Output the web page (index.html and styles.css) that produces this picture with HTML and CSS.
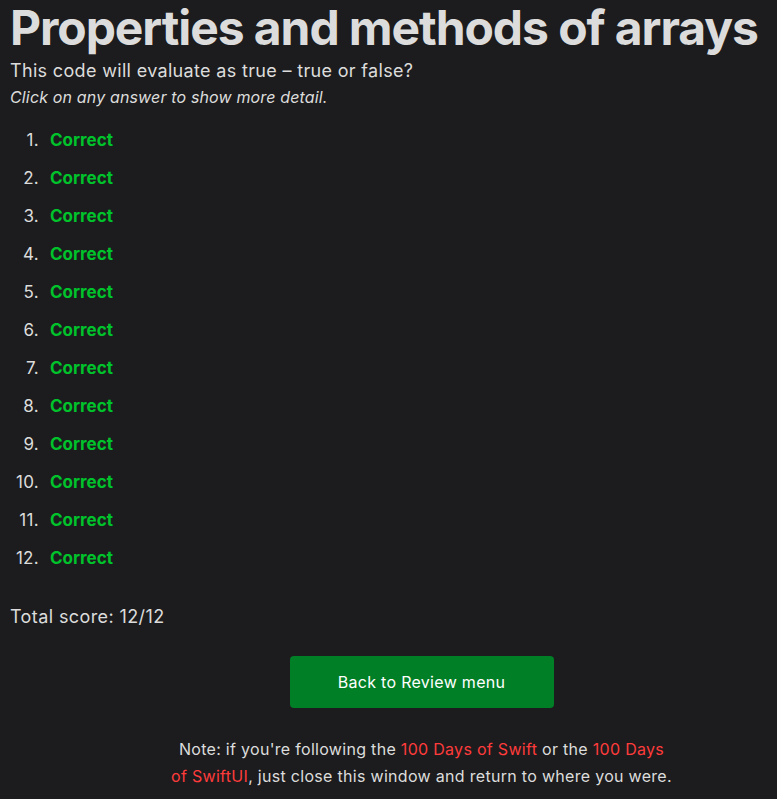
FILE: index.html
```html
<!DOCTYPE html>
<html lang="en">
<head>
<meta charset="utf-8">
<title>Properties and methods of arrays</title>
<link rel="stylesheet" href="styles.css">
</head>
<body>
<main class="page">
  <h1 class="title">Properties and methods of arrays</h1>
  <p class="subtitle">This code will evaluate as true – true or false?</p>
  <p class="hint">Click on any answer to show more detail.</p>
  <ol class="answers">
    <li><span class="correct">Correct</span></li>
    <li><span class="correct">Correct</span></li>
    <li><span class="correct">Correct</span></li>
    <li><span class="correct">Correct</span></li>
    <li><span class="correct">Correct</span></li>
    <li><span class="correct">Correct</span></li>
    <li><span class="correct">Correct</span></li>
    <li><span class="correct">Correct</span></li>
    <li><span class="correct">Correct</span></li>
    <li><span class="correct">Correct</span></li>
    <li><span class="correct">Correct</span></li>
    <li><span class="correct">Correct</span></li>
  </ol>
  <p class="score">Total score: 12/12</p>
  <div class="footer">
    <div class="actions">
      <a class="button" href="#">Back to Review menu</a>
    </div>
    <p class="note">Note: if you're following the <a href="#">100 Days of Swift</a> or the <a href="#">100 Days of SwiftUI</a>, just close this window and return to where you were.</p>
  </div>
</main>
</body>
</html>
```

FILE: styles.css
```css
html, body {
  margin: 0;
  padding: 0;
  background: #1c1c1e;
}
body {
  color: #dcdcdc;
  font-family: Inter, "Noto Sans", "Liberation Sans", sans-serif;
}
.page {
  padding: 0 10px;
}
.title {
  margin: 0;
  padding-top: 2px;
  font-size: 48px;
  font-weight: 700;
  line-height: 52px;
  letter-spacing: -1.08px;
  white-space: nowrap;
}
.subtitle {
  margin: 4px 0 0;
  font-size: 18px;
  line-height: 26px;
  letter-spacing: 0.33px;
}
.hint {
  margin: 0;
  font-size: 16px;
  font-style: italic;
  line-height: 26px;
  letter-spacing: 0.15px;
}
.answers {
  margin: 11px 0 0;
  padding: 0;
  list-style: none;
  counter-reset: item;
  font-size: 17px;
}
.answers li {
  display: flex;
  line-height: 38px;
  counter-increment: item;
}
.answers li::before {
  content: counter(item) ".";
  width: 29px;
  margin-right: 11px;
  text-align: right;
  letter-spacing: 0.3px;
}
.correct {
  color: #00c32c;
  font-weight: 700;
}
.score {
  margin: 27px 0 0;
  font-size: 18px;
  line-height: 26px;
  letter-spacing: 0.4px;
}
.footer {
  margin-left: 66px;
}
.actions {
  display: flex;
  justify-content: center;
  margin-top: 26px;
}
.button {
  display: flex;
  align-items: center;
  justify-content: center;
  width: 264px;
  height: 52px;
  background: #007f26;
  color: #ffffff;
  border-radius: 4px;
  text-decoration: none;
  font-size: 16px;
  letter-spacing: 0.3px;
}
.note {
  margin: 28px auto 0;
  width: 502px;
  text-align: center;
  font-size: 16px;
  line-height: 27px;
  letter-spacing: 0.3px;
}
.note a {
  color: #ff3b3b;
  text-decoration: none;
}
```
